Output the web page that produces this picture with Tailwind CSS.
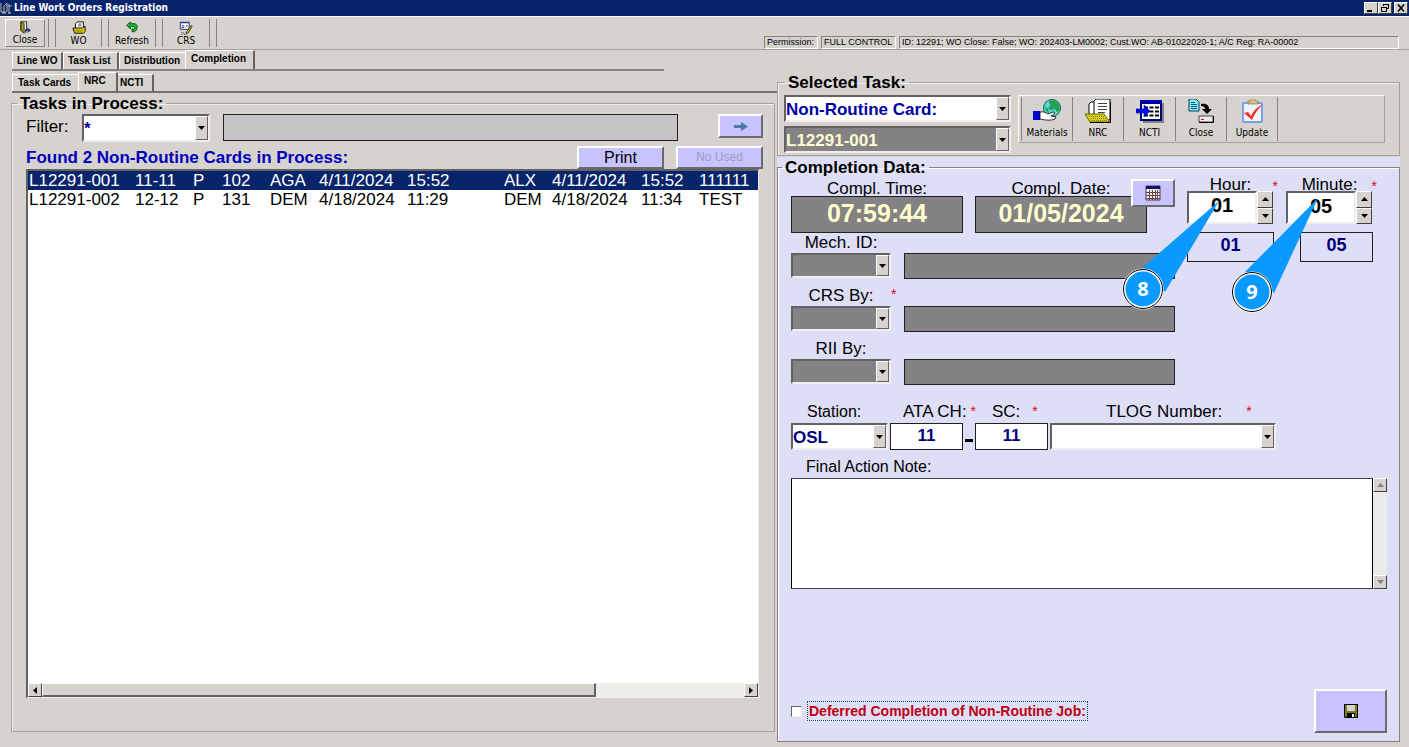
<!DOCTYPE html>
<html lang="en">
<head>
  <meta charset="UTF-8">
  <meta name="viewport" content="width=device-width, initial-scale=1.0">
  <title>Line Work Orders Registration</title>
  <script src="https://cdn.jsdelivr.net/npm/@tailwindcss/browser@4"></script>
</head>
<body class="min-h-screen flex flex-col bg-[#d6d3ce] text-black font-['Liberation_Sans',Arial,sans-serif]">
  <!-- Title bar -->
  <header class="h-4 flex items-center bg-[#08246b] pr-px">
    <svg class="w-3 h-3 mr-0.5" viewBox="0 0 12 12" fill="none">
      <path d="M1 1v9h5M4 10V4l3-3v9M9 2v9M7 4h5" stroke="#b8b6a8"/>
      <path d="M2 11h4M8 11h3" stroke="#e8d870"/>
    </svg>
    <h1 class="flex-1 text-[10px] leading-4 font-bold text-white font-['DejaVu_Sans_Condensed','DejaVu_Sans',sans-serif]">Line Work Orders Registration</h1>
    <div class="flex">
      <button aria-label="Minimize" class="w-[14px] h-3 bg-[#d6d3ce] border border-t-white border-l-white border-r-[#424142] border-b-[#424142]">
        <svg class="w-3 h-[10px]" viewBox="0 0 12 10"><path d="M2 7h5v2H2z"/></svg>
      </button>
      <button aria-label="Restore" class="w-[14px] h-3 bg-[#d6d3ce] border border-t-white border-l-white border-r-[#424142] border-b-[#424142]">
        <svg class="w-3 h-[10px]" viewBox="0 0 12 10" fill="none" stroke="#000"><path d="M4.500 3V1.500h5v4H8M4 1.500h6M2.500 4.500h5v4h-5zM2 4.500h6"/></svg>
      </button>
      <button aria-label="Close window" class="w-[14px] h-3 ml-[2px] bg-[#d6d3ce] border border-t-white border-l-white border-r-[#424142] border-b-[#424142]">
        <svg class="w-3 h-[10px]" viewBox="0 0 12 10" stroke="#000" stroke-width="1.600"><path d="M3 1.500l6 7M9 1.500l-6 7"/></svg>
      </button>
    </div>
  </header>

  <!-- Main toolbar -->
  <div class="h-[34px] flex justify-between border-t border-t-white border-b border-b-[#a5a29c]">
    <div class="flex items-stretch py-0.5 pl-[5px] text-[10px] leading-3 font-['DejaVu_Sans_Condensed','DejaVu_Sans',sans-serif]">
      <button class="w-10 pt-px flex flex-col items-center border border-t-white border-l-white border-r-[#848284] border-b-[#848284]">
        <svg class="w-4 h-4" viewBox="0 0 16 16">
          <path d="M3 12V1h7v11" fill="#fff" stroke="#000"/>
          <path d="M3 1l4 2v12l-4-3z" fill="#9c9a10" stroke="#000" stroke-width=".8"/>
          <path d="M8 11h5M11 9l3 2.500-3 2.500M9 11v3" fill="none" stroke="#08106b" stroke-width="1.300"/>
        </svg>
        Close
      </button>
      <div class="w-2 ml-[3px] border-x border-[#848284]"></div>
      <button class="w-[45px] pt-0.5 flex flex-col items-center">
        <svg class="w-4 h-4" viewBox="0 0 16 16">
          <path d="M4 9V3l2-2h7v8" fill="#fff" stroke="#000"/>
          <path d="M7 3.500h4M7 5.500h4" stroke="#424142"/>
          <path d="M1 8h11l3-2v6l-2 2H3z" fill="#ded700" stroke="#000"/>
          <path d="M3 10.500h9M4 12.500h8" stroke="#847d00"/>
        </svg>
        WO
      </button>
      <div class="w-2 border-x border-[#848284]"></div>
      <button class="w-[46px] pt-0.5 flex flex-col items-center">
        <svg class="w-4 h-4" viewBox="0 0 16 16">
          <path d="M2 5l4-4v2h4c4 0 5 4 3 7-1 2-3 3-5 2V9c2 1 4 0 3-2-1-1-2-1-5-1v3z" fill="#10ba31" stroke="#004910"/>
        </svg>
        Refresh
      </button>
      <div class="w-2 border-x border-[#848284]"></div>
      <button class="w-[46px] pt-0.5 flex flex-col items-center">
        <svg class="w-4 h-4" viewBox="0 0 16 16">
          <path d="M1.500 1.500h10v8h-10z" fill="#fff" stroke="#10208c"/>
          <path d="M1 2h11M3 5.500h3M8 5.500h2M3 7.500h3" stroke="#10208c"/>
          <path d="M14 5l-5 7-1 3 3-2 4-7z" fill="#ded700" stroke="#000" stroke-width=".8"/>
          <path d="M3 13.500h1M5 13.500h1M3 15.500h1M6 15.500h1" stroke="#000"/>
        </svg>
        CRS
      </button>
      <div class="w-2 border-x border-[#848284]"></div>
    </div>
    <!-- Status panels -->
    <div class="self-end flex gap-[3px] pr-[10px] text-[9px] leading-[11px] whitespace-nowrap">
      <span class="w-[54px] pl-[2px] border border-t-[#848284] border-l-[#848284] border-r-white border-b-white">Permission:</span>
      <span class="w-[75px] pl-[2px] border border-t-[#848284] border-l-[#848284] border-r-white border-b-white">FULL CONTROL</span>
      <span class="w-[500px] pl-[2px] border border-t-[#848284] border-l-[#848284] border-r-white border-b-white">ID: 12291; WO Close: False; WO: 202403-LM0002; Cust.WO: AB-01022020-1; A/C Reg: RA-00002</span>
    </div>
  </div>

  <main class="flex-1 grid grid-cols-[777fr_632fr]">
    <!-- Left side -->
    <div class="min-w-0 flex flex-col pb-[15px]">
      <nav class="ml-3 w-[652px] h-[21px] flex items-end pt-px border-b-2 border-b-[#848284] text-[10px] leading-4 font-bold whitespace-nowrap">
        <a href="#" class="w-[51px] h-[17px] pl-1 border-l border-t border-white border-r-2 border-r-[#636163]">Line WO</a>
        <a href="#" class="w-[56px] h-[17px] pl-1 border-l border-t border-white border-r-2 border-r-[#636163]">Task List</a>
        <a href="#" class="w-[66px] h-[17px] pl-1 border-l border-t border-white">Distribution</a>
        <a href="#" class="w-[70px] h-[19px] pl-[5px] border-l border-t border-white border-r-2 border-r-[#636163]">Completion</a>
      </nav>
      <nav class="ml-3 h-[22px] flex items-end border-b-2 border-b-[#737173] text-[10px] leading-4 font-bold whitespace-nowrap">
        <a href="#" class="w-[66px] h-[17px] pl-[5px] border-l border-t border-white">Task Cards</a>
        <a href="#" class="w-[40px] h-[19px] pl-[5px] border-l border-t border-white border-r-2 border-r-[#636163]">NRC</a>
        <a href="#" class="w-[36px] h-[17px] pl-[2px] border-t border-white border-r-2 border-r-[#636163]">NCTI</a>
      </nav>

      <fieldset class="flex-1 ml-[11px] mr-0.5 pl-[14px] pr-[11px] pb-[33px] flex flex-col border border-[#a5a29c] shadow-[inset_1px_1px_0_#efefec]">
        <legend class="-ml-[9px] px-[3px] pt-px text-[17px] leading-5 font-bold">Tasks in Process:</legend>
        <div class="flex items-start">
          <label for="filter" class="w-[56px] text-[17px] leading-[26px]">Filter:</label>
          <div class="relative w-[128px] h-7">
            <select id="filter" class="appearance-none w-full h-full pb-1 bg-white text-[17px] font-bold text-[#0000a5] border-2 border-t-[#636163] border-l-[#636163] border-r-[#efefef] border-b-[#efefef]"><option>*</option></select>
            <span class="absolute right-0.5 inset-y-0.5 w-[13px] flex items-center justify-center bg-[#d6d3ce] border border-t-white border-l-white border-r-[#636163] border-b-[#636163] pointer-events-none"><svg class="w-[7px] h-1" viewBox="0 0 7 4"><path d="M0 0h7L3.500 4z"/></svg></span>
          </div>
          <input aria-label="Filter text" class="flex-1 min-w-0 h-[27px] ml-[13px] mr-10 bg-[#c6c3c6] border border-[#212021]">
          <button aria-label="Next" class="w-[45px] h-6 flex items-center justify-center bg-[#c6c3ff] border-2 border-t-white border-l-white border-r-[#6b696b] border-b-[#6b696b]">
            <svg class="w-[14px] h-[9px]" viewBox="0 0 14 9"><path d="M0 3h7V0L14 4.500l-7 4.500V6H0z" fill="#4a79a5"/></svg>
          </button>
        </div>
        <div class="flex items-end mt-1">
          <h2 class="flex-1 text-[17px] leading-[22px] font-bold text-[#0000bd]">Found 2 Non-Routine Cards in Process:</h2>
          <button class="w-[87px] h-[23px] text-base leading-[19px] text-black bg-[#c6c3ff] border-2 border-t-white border-l-white border-r-[#6b696b] border-b-[#6b696b]">Print</button>
          <button disabled class="w-[87px] h-[23px] ml-3 text-[12px] leading-[19px] text-[#9c9abd] bg-[#c6c3ff] border-2 border-t-white border-l-white border-r-[#6b696b] border-b-[#6b696b]">No Used</button>
        </div>
        <!-- Task list -->
        <div class="flex-1 flex flex-col justify-between mr-1 bg-white border-t-2 border-l-2 border-t-[#636163] border-l-[#636163] border-r border-b border-r-[#efefef] border-b-[#efefef]">
          <table class="w-full table-fixed text-[17px] leading-[19px] text-left whitespace-nowrap">
            <colgroup>
              <col class="w-[107px]"><col class="w-[58px]"><col class="w-[29px]"><col class="w-[48px]"><col class="w-[49px]"><col class="w-[88px]"><col class="w-[97px]"><col class="w-[48px]"><col class="w-[89px]"><col class="w-[58px]"><col>
            </colgroup>
            <tbody>
              <tr class="bg-[#08246b] text-white">
                <td class="pl-px">L12291-001</td><td>11-11</td><td>P</td><td>102</td><td>AGA</td><td>4/11/2024</td><td>15:52</td><td>ALX</td><td>4/11/2024</td><td>15:52</td><td>111111</td>
              </tr>
              <tr>
                <td class="pl-px">L12291-002</td><td>12-12</td><td>P</td><td>131</td><td>DEM</td><td>4/18/2024</td><td>11:29</td><td>DEM</td><td>4/18/2024</td><td>11:34</td><td>TEST</td>
              </tr>
            </tbody>
          </table>
          <div class="h-[14px] flex bg-[#efeeeb]">
            <button aria-label="Scroll left" class="w-[14px] flex items-center justify-center bg-[#d6d3ce] border border-t-white border-l-white border-r-[#424142] border-b-[#424142]"><svg class="w-1 h-[7px]" viewBox="0 0 4 7"><path d="M4 0v7L0 3.500z"/></svg></button>
            <div class="w-[554px] bg-[#d6d3ce] border-t border-l border-white border-r-2 border-b-2 border-r-[#636163] border-b-[#636163]"></div>
            <button aria-label="Scroll right" class="w-[14px] ml-auto flex items-center justify-center bg-[#d6d3ce] border border-t-white border-l-white border-r-[#424142] border-b-[#424142]"><svg class="w-1 h-[7px]" viewBox="0 0 4 7"><path d="M0 0v7l4-3.500z"/></svg></button>
          </div>
        </div>
      </fieldset>
    </div>

    <!-- Right side -->
    <div class="min-w-0 flex flex-col pt-[22px] pr-[9px] pb-[5px]">
      <fieldset class="pl-[6px] pr-[14px] pb-[2px] border border-[#a5a29c] shadow-[inset_1px_1px_0_#efefec]">
        <legend class="ml-px px-[3px] pt-px text-[17px] leading-5 font-bold">Selected Task:</legend>
        <div class="flex items-start pt-0.5">
          <div class="w-[227px] flex flex-col gap-1">
            <div class="relative h-[27px]">
              <select aria-label="Task type" class="appearance-none w-full h-full pb-0.5 bg-white text-[17px] font-bold text-[#0000a5] border-2 border-t-[#636163] border-l-[#636163] border-r-[#efefef] border-b-[#efefef]"><option>Non-Routine Card:</option></select>
              <span class="absolute right-0.5 inset-y-0.5 w-[13px] flex items-center justify-center bg-[#d6d3ce] border border-t-white border-l-white border-r-[#636163] border-b-[#636163] pointer-events-none"><svg class="w-[7px] h-1" viewBox="0 0 7 4"><path d="M0 0h7L3.500 4z"/></svg></span>
            </div>
            <div class="relative h-[27px]">
              <select aria-label="Task number" class="appearance-none w-full h-full pb-0.5 bg-[#848284] text-[17px] font-bold text-[#ffffce] border-2 border-t-[#636163] border-l-[#636163] border-r-[#efefef] border-b-[#efefef]"><option>L12291-001</option></select>
              <span class="absolute right-0.5 inset-y-0.5 w-[13px] flex items-center justify-center bg-[#d6d3ce] border border-t-white border-l-white border-r-[#636163] border-b-[#636163] pointer-events-none"><svg class="w-[7px] h-1" viewBox="0 0 7 4"><path d="M0 0h7L3.500 4z"/></svg></span>
            </div>
          </div>
          <div class="flex-1 h-12 ml-[7px] p-px pl-0.5 flex border border-t-white border-l-white border-r-[#a5a29c] border-b-[#a5a29c] text-[10px] leading-3 font-['DejaVu_Sans_Condensed','DejaVu_Sans',sans-serif]">
            <button class="w-[52px] pt-0.5 flex flex-col items-center gap-1 border-x border-l-[#848284] border-r-[#848284]">
              <svg class="w-7 h-6" viewBox="0 0 28 24">
                <circle cx="19" cy="9" r="8.500" fill="#5ad7d6" stroke="#105d63"/>
                <path d="M16 2c4-2 8 0 10 4 1 3 1 5-1 7-2 0-2-2-3-3l-4 1c-3 0-3-3-1-4 1-2-2-3-1-5zM12 7l3 3 1 4-3-2z" fill="#21a252"/>
                <path d="M0 12h7v9H0z" fill="#0000d6"/>
                <path d="M7 13c4-1 6 1 8 2l5-2c2 0 2 1 1 2l-3 2 5 1-1 2c-5 2-10 1-15 0z" fill="#fff" stroke="#000" stroke-width=".8"/>
              </svg>
              Materials
            </button>
            <button class="w-[51px] pt-0.5 flex flex-col items-center gap-1 border-r border-r-[#848284]">
              <svg class="w-7 h-6" viewBox="0 0 28 24">
                <path d="M5 16V5l2-2h4v12" fill="#fff" stroke="#000"/>
                <path d="M10 2l2-2h14v21H10z" fill="#fff" stroke="#000"/>
                <path d="M14 4.500h9M14 7.500h9M14 10.500h9M14 13.500h7" stroke="#424142"/>
                <path d="M1 15h19l6 8H6z" fill="#d6cf18" stroke="#6b6500"/>
                <path d="M5 17.500h15M7 19.500h15M8 21.500h15" stroke="#8c8600" stroke-dasharray="1 1"/>
                <path d="M26.500 3v20.500H6" fill="none" stroke="#000"/>
              </svg>
              NRC
            </button>
            <button class="w-[52px] pt-0.5 flex flex-col items-center gap-1 border-r border-r-[#848284]">
              <svg class="w-7 h-6" viewBox="0 0 28 24">
                <path d="M7 4h21v20H7z" fill="#848284"/>
                <path d="M5 2h20v19H5z" fill="#fff" stroke="#00007b" stroke-width="2"/>
                <path d="M4 1h22v4H4z" fill="#0000a5"/>
                <path d="M8 8.500h15M8 12.500h15M8 16.500h15" stroke="#000" stroke-width="2" stroke-dasharray="4 1.500"/>
                <path d="M0 10h8V6l6 6-6 6v-4H0z" fill="#0008f7" stroke="#00007b" stroke-width=".6"/>
              </svg>
              NCTI
            </button>
            <button class="w-[51px] pt-0.5 flex flex-col items-center gap-1 border-r border-r-[#848284]">
              <svg class="w-7 h-6" viewBox="0 0 28 24">
                <path d="M2 0h7l3 3v9H2z" fill="#8ce7f7" stroke="#003c5a"/>
                <path d="M4 3.500h4M4 5.500h6M4 7.500h6M4 9.500h6" stroke="#005d84"/>
                <path d="M14 5c5-1 8 1 8 5h3l-5 5-5-5h3c0-2-1-3-4-3z"/>
                <path d="M12 17h14v6H12z" fill="#efefef" stroke="#424142"/>
                <path d="M12 23.500h14.500V17" fill="none" stroke="#000"/>
                <path d="M14 20h3v1h-3z" fill="#f70000"/>
              </svg>
              Close
            </button>
            <button class="w-[51px] pt-0.5 flex flex-col items-center gap-1 border-r border-r-[#848284]">
              <svg class="w-7 h-6" viewBox="0 0 28 24">
                <rect x="4" y="3" width="21" height="21" rx="2" fill="#7b9ee7"/>
                <path d="M6 5h17v17H6z" fill="#eff3ff"/>
                <path d="M10 5V2h2c1-3 5-3 6 0h2v3z" fill="#d6be84" stroke="#847142" stroke-width=".7"/>
                <path d="M6 14l4-1 3 4c2-5 6-9 12-12-5 5-8 9-11 16z" fill="#ef3021"/>
              </svg>
              Update
            </button>
          </div>
        </div>
      </fieldset>

      <div class="flex-1 flex flex-col mt-px bg-[#dedff7]">
        <fieldset class="flex-1 pl-[13px] pr-[12px] pb-2 flex flex-col border border-[#848284] shadow-[inset_1px_1px_0_#fff]">
          <legend class="-ml-[9px] px-[3px] pt-px text-[17px] leading-5 font-bold">Completion Data:</legend>
          <div class="flex gap-3">
            <div class="w-[384px]">
              <div class="relative flex gap-3">
                <div class="w-[172px] flex flex-col">
                  <label for="ctime" class="h-[18px] text-center text-[17px] leading-[22px]">Compl. Time:</label>
                  <input id="ctime" value="07:59:44" class="w-full h-[37px] pb-0.5 text-center text-[25px] font-bold text-[#ffffce] bg-[#848284] border border-[#212021]">
                </div>
                <div class="w-[172px] flex flex-col">
                  <label for="cdate" class="h-[18px] text-center text-[17px] leading-[22px]">Compl. Date:</label>
                  <input id="cdate" value="01/05/2024" class="w-full h-[37px] pb-0.5 text-center text-[25px] font-bold text-[#ffffce] bg-[#848284] border border-[#212021]">
                </div>
                <button aria-label="Pick date" class="absolute right-0 top-px w-[44px] h-7 flex items-center justify-center bg-[#c6c3ff] border-2 border-t-white border-l-white border-r-[#6b696b] border-b-[#6b696b]">
                  <svg class="w-4 h-4" viewBox="0 0 16 16">
                    <path d="M1 1h14v14H1z" fill="#f7efe7" stroke="#423c52"/>
                    <path d="M1 1h14v3H1z" fill="#10106b"/>
                    <path d="M4.500 5v10M7.500 5v10M10.500 5v10M12.500 5v10M1 7.500h14M1 10.500h14M1 13.500h14" stroke="#6b454a"/>
                  </svg>
                </button>
              </div>

              <label for="mech" class="block w-[100px] text-center text-[17px] leading-5">Mech. ID:</label>
              <div class="flex justify-between items-start">
                <div class="relative w-[100px] h-[25px]">
                  <select id="mech" class="appearance-none w-full h-full bg-[#848284] border-2 border-t-[#636163] border-l-[#636163] border-r-[#efefef] border-b-[#efefef]"></select>
                  <span class="absolute right-0.5 inset-y-0.5 w-[13px] flex items-center justify-center bg-[#d6d3ce] border border-t-white border-l-white border-r-[#636163] border-b-[#636163] pointer-events-none"><svg class="w-[7px] h-1" viewBox="0 0 7 4"><path d="M0 0h7L3.500 4z"/></svg></span>
                </div>
                <input aria-label="Mechanic name" class="w-[271px] h-[26px] bg-[#848284] border border-[#212021]">
              </div>

              <div class="flex mt-[7px]">
                <label for="crs" class="w-[100px] text-center text-[17px] leading-5">CRS By:</label>
                <span class="text-[14px] leading-4 text-[#e70021]">*</span>
              </div>
              <div class="flex justify-between items-start">
                <div class="relative w-[100px] h-[25px]">
                  <select id="crs" class="appearance-none w-full h-full bg-[#848284] border-2 border-t-[#636163] border-l-[#636163] border-r-[#efefef] border-b-[#efefef]"></select>
                  <span class="absolute right-0.5 inset-y-0.5 w-[13px] flex items-center justify-center bg-[#d6d3ce] border border-t-white border-l-white border-r-[#636163] border-b-[#636163] pointer-events-none"><svg class="w-[7px] h-1" viewBox="0 0 7 4"><path d="M0 0h7L3.500 4z"/></svg></span>
                </div>
                <input aria-label="CRS name" class="w-[271px] h-[26px] bg-[#848284] border border-[#212021]">
              </div>

              <label for="rii" class="block w-[100px] mt-[7px] text-center text-[17px] leading-5">RII By:</label>
              <div class="flex justify-between items-start">
                <div class="relative w-[100px] h-[25px]">
                  <select id="rii" class="appearance-none w-full h-full bg-[#848284] border-2 border-t-[#636163] border-l-[#636163] border-r-[#efefef] border-b-[#efefef]"></select>
                  <span class="absolute right-0.5 inset-y-0.5 w-[13px] flex items-center justify-center bg-[#d6d3ce] border border-t-white border-l-white border-r-[#636163] border-b-[#636163] pointer-events-none"><svg class="w-[7px] h-1" viewBox="0 0 7 4"><path d="M0 0h7L3.500 4z"/></svg></span>
                </div>
                <input aria-label="RII name" class="w-[271px] h-[26px] bg-[#848284] border border-[#212021]">
              </div>
            </div>

            <!-- Hour and minute -->
            <div class="relative w-[87px] flex flex-col">
              <label for="hour" class="h-[13px] text-center text-[17px] leading-[14px]">Hour:</label>
              <span class="absolute -right-1 top-0 text-[14px] leading-4 text-[#e70021]">*</span>
              <div class="flex h-[33px]">
                <input id="hour" value="01" class="w-[70px] h-[33px] pb-1 text-center text-xl font-bold bg-white border-2 border-t-[#636163] border-l-[#636163] border-r-[#efefef] border-b-[#efefef]">
                <div class="w-4 flex flex-col">
                  <button aria-label="Hour up" class="flex-1 flex items-center justify-center bg-[#d6d3ce] border border-t-white border-l-white border-r-[#424142] border-b-[#424142]"><svg class="w-[7px] h-1" viewBox="0 0 7 4"><path d="M0 4h7L3.500 0z"/></svg></button>
                  <button aria-label="Hour down" class="flex-1 flex items-center justify-center bg-[#d6d3ce] border border-t-white border-l-white border-r-[#424142] border-b-[#424142]"><svg class="w-[7px] h-1" viewBox="0 0 7 4"><path d="M0 0h7L3.500 4z"/></svg></button>
                </div>
              </div>
              <output for="hour" class="h-[30px] mt-2 text-center text-lg leading-6 font-bold text-[#00007b] border border-[#212021]">01</output>
              <svg class="absolute -left-[66px] top-5 w-[102px] h-[112px]" viewBox="0 0 102 112">
                <path d="M98 3L20 71l24 23z" fill="#0a9aff"/>
                <circle cx="22" cy="91" r="19" fill="#0a9aff" stroke="#fff" stroke-width="3"/>
                <circle cx="22" cy="91" r="19.500" fill="none" stroke="#000"/>
                <text x="22" y="98" text-anchor="middle" fill="#fff" class="text-xl font-bold font-['Open_Sans',sans-serif]">8</text>
              </svg>
            </div>
            <div class="relative w-[87px] flex flex-col">
              <label for="minute" class="h-[13px] text-center text-[17px] leading-[14px]">Minute:</label>
              <span class="absolute -right-1 top-0 text-[14px] leading-4 text-[#e70021]">*</span>
              <div class="flex h-[33px]">
                <input id="minute" value="05" class="w-[70px] h-[33px] pb-0.5 text-center text-xl font-bold bg-white border-2 border-t-[#636163] border-l-[#636163] border-r-[#efefef] border-b-[#efefef]">
                <div class="w-4 flex flex-col">
                  <button aria-label="Minute up" class="flex-1 flex items-center justify-center bg-[#d6d3ce] border border-t-white border-l-white border-r-[#424142] border-b-[#424142]"><svg class="w-[7px] h-1" viewBox="0 0 7 4"><path d="M0 4h7L3.500 0z"/></svg></button>
                  <button aria-label="Minute down" class="flex-1 flex items-center justify-center bg-[#d6d3ce] border border-t-white border-l-white border-r-[#424142] border-b-[#424142]"><svg class="w-[7px] h-1" viewBox="0 0 7 4"><path d="M0 0h7L3.500 4z"/></svg></button>
                </div>
              </div>
              <output for="minute" class="w-[73px] h-[30px] mt-2 ml-auto text-center text-lg leading-6 font-bold text-[#00007b] border border-[#212021]">05</output>
              <svg class="absolute -left-[56px] top-4 w-[92px] h-[120px]" viewBox="0 0 92 120">
                <path d="M88 4L15 78l29 21z" fill="#0a9aff"/>
                <circle cx="22" cy="98" r="19" fill="#0a9aff" stroke="#fff" stroke-width="3"/>
                <circle cx="22" cy="98" r="19.500" fill="none" stroke="#000"/>
                <text x="22" y="105" text-anchor="middle" fill="#fff" class="text-xl font-bold font-['Open_Sans',sans-serif]">9</text>
              </svg>
            </div>
          </div>

          <!-- Station, ATA and TLOG -->
          <div class="flex mt-4 text-[17px] leading-[22px]">
            <label for="station" class="w-[99px] pl-4 text-base leading-[22px]">Station:</label>
            <div class="w-[100px] pl-[13px] flex gap-1"><label for="ata">ATA CH:</label><span class="text-[14px] leading-5 text-[#e70021]">*</span></div>
            <div class="w-[60px] pl-[2px] flex gap-3"><label for="sc">SC:</label><span class="text-[14px] leading-5 text-[#e70021]">*</span></div>
            <div class="pl-[56px] flex gap-6"><label for="tlog">TLOG Number:</label><span class="text-[14px] leading-5 text-[#e70021]">*</span></div>
          </div>
          <div class="flex gap-0.5">
            <div class="relative w-[97px] h-[27px]">
              <select id="station" class="appearance-none w-full h-full pb-0.5 bg-white text-[17px] font-bold text-[#00007b] border-2 border-t-[#636163] border-l-[#636163] border-r-[#efefef] border-b-[#efefef]"><option>OSL</option></select>
              <span class="absolute right-0.5 inset-y-0.5 w-[13px] flex items-center justify-center bg-[#d6d3ce] border border-t-white border-l-white border-r-[#636163] border-b-[#636163] pointer-events-none"><svg class="w-[7px] h-1" viewBox="0 0 7 4"><path d="M0 0h7L3.500 4z"/></svg></span>
            </div>
            <input id="ata" value="11" class="w-[73px] h-[27px] pb-0.5 text-center text-[17px] font-bold text-[#00007b] bg-white border border-[#212021]">
            <span class="w-2 h-[27px] flex items-end pb-2"><span class="w-full h-[3px] bg-black"></span></span>
            <input id="sc" value="11" class="w-[73px] h-[27px] pb-0.5 text-center text-[17px] font-bold text-[#00007b] bg-white border border-[#212021]">
            <div class="relative w-[226px] h-[27px]">
              <select id="tlog" class="appearance-none w-full h-full bg-white border-2 border-t-[#636163] border-l-[#636163] border-r-[#efefef] border-b-[#efefef]"></select>
              <span class="absolute right-0.5 inset-y-0.5 w-[13px] flex items-center justify-center bg-[#d6d3ce] border border-t-white border-l-white border-r-[#636163] border-b-[#636163] pointer-events-none"><svg class="w-[7px] h-1" viewBox="0 0 7 4"><path d="M0 0h7L3.500 4z"/></svg></span>
            </div>
          </div>

          <label for="note" class="mt-[6px] pl-[15px] text-base leading-[22px]">Final Action Note:</label>
          <div class="flex h-[111px]">
            <textarea id="note" class="flex-1 min-w-0 resize-none bg-white border border-t-[#424142] border-l-black border-r-black border-b-[#424142]"></textarea>
            <div class="w-[14px] flex flex-col justify-between bg-[#ebebe9]">
              <button aria-label="Scroll up" class="h-[14px] flex items-center justify-center bg-[#d6d3ce] border border-t-white border-l-white border-r-[#424142] border-b-[#424142]"><svg class="w-[7px] h-1" viewBox="0 0 7 4"><path d="M0 4h7L3.500 0z" fill="#848284"/></svg></button>
              <button aria-label="Scroll down" class="h-[14px] flex items-center justify-center bg-[#d6d3ce] border border-t-white border-l-white border-r-[#424142] border-b-[#424142]"><svg class="w-[7px] h-1" viewBox="0 0 7 4"><path d="M0 0h7L3.500 4z" fill="#848284"/></svg></button>
            </div>
          </div>

          <div class="flex-1 flex items-end justify-between">
            <div class="flex items-center gap-[5px] pb-3">
              <input id="deferred" type="checkbox" class="appearance-none w-[11px] h-[11px] bg-white border border-t-[#636163] border-l-[#636163] border-r-[#efefef] border-b-[#efefef]">
              <label for="deferred" class="px-px text-sm leading-[18px] font-bold text-[#bd0010] border border-dotted border-[#104a6b]">Deferred Completion of Non-Routine Job:</label>
            </div>
            <button aria-label="Save" class="w-[73px] h-[44px] flex items-center justify-center bg-[#c6c3ff] border-2 border-t-white border-l-white border-r-[#6b696b] border-b-[#6b696b]">
              <svg class="w-[14px] h-[14px]" viewBox="0 0 14 14">
                <path d="M0 0h14v14H1l-1-1z"/>
                <path d="M1 1h2v6h8V1h2v12H1z" fill="#7b7a18"/>
                <path d="M3 1h8v6H3z" fill="#d6d3ce"/>
                <path d="M3 9h8v5H3z"/>
                <path d="M8 10h2v3H8z" fill="#fff"/>
              </svg>
            </button>
          </div>
        </fieldset>
      </div>
    </div>
  </main>
</body>
</html>
